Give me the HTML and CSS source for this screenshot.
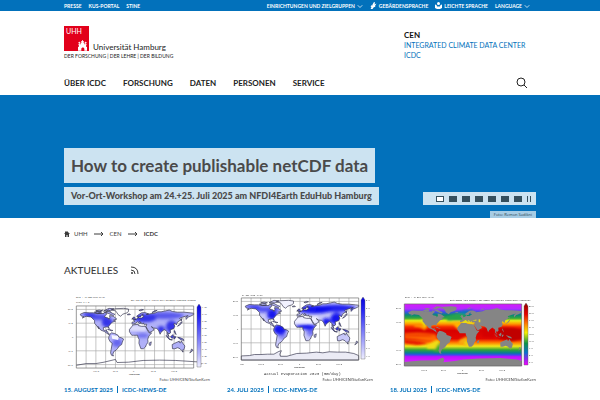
FILE: index.html
```html
<!DOCTYPE html>
<html lang="de">
<head>
<meta charset="utf-8">
<meta name="viewport" content="width=device-width, initial-scale=1">
<title>ICDC : Universität Hamburg</title>
<link rel="stylesheet" href="styles.css">
</head>
<body>
<svg class="defs" aria-hidden="true">
  <defs>
    <path id="land" d="M-168-66L-156-71-140-70-128-70-115-68-95-68-94-72-85-68-94-60-92-57-82-55-80-51-77-56-78-62-70-61-65-59-56-52-66-49-60-46-70-43-75-38-81-31-80-25-83-29-90-29-97-27-97-21-91-18-87-21-88-16-83-15-83-10-78-9-80-7-85-10-94-16-105-20-112-29-114-31-110-23-117-32-124-40-124-48-135-58-150-60-162-55-157-59-165-61ZM-125-72L-115-73-105-73-103-69-115-68ZM-95-76L-80-83-65-82-78-76ZM-90-73L-80-74-68-68-62-66-66-62-74-65-85-70ZM-120-76L-110-78-100-76-108-74ZM-84-22L-78-23-74-20-68-19-72-18-78-20ZM-77-8L-72-12-62-10-52-5-50 0-40 3-35 6-39 15-41 22-48 26-54 34-58 38-65 42-68 50-66 55-72 53-75 46-73 36-70 18-76 14-81 5-80-1ZM-17-15L-17-22-10-30-6-35 10-37 11-33 20-31 32-31 37-22 43-12 51-12 42-2 39 7 40 15 35 22 32 29 26 34 18 34 12 18 13 8 9 0 8-5-4-5-10-5ZM44 24L43 18 50 14 48 24ZM-9-37L-9-43-1-44-4-48 4-52 9-55 9-58 13-55 20-55 28-60 22-62 25-66 20-64 17-58 12-58 5-60 10-64 20-70 30-71 42-67 35-65 45-67 60-69 70-73 80-73 90-75 105-78 115-74 130-72 150-72 170-70 180-69 180-65 170-60 163-58 157-51 156-58 163-62 150-59 137-54 141-50 130-43 127-35 122-40 119-38 122-31 118-24 108-21 109-12 104-9 100-13 104-1 98-8 98-16 90-22 80-14 77-8 72-20 66-25 57-26 50-30 57-24 58-20 45-13 39-21 34-30 36-37 27-37 26-41 22-37 19-42 13-45 18-40 15-38 8-44 0-39ZM-6-50L2-51-2-58-6-57ZM-10-52L-6-55-7-52ZM-23-64L-14-65-16-67-23-66ZM130-31L136-34 141-38 145-44 141-43 136-36 132-33ZM142-46L144-54 141-49ZM95-5L106 5 104 6 98-1ZM105 7L115 8 114 9ZM109-1L117-7 118 0 114 4ZM119 5L120-1 125-1 122 5ZM120-18L122-18 126-7 121-13ZM131 1L138 2 148 6 150 10 140 8 137 5ZM114 22L122 18 129 15 136 12 136 16 140 17 142 11 147 19 153 26 150 37 143 39 138 34 131 31 122 34 115 34ZM145 41L148 41 147 44ZM173 35L178 38 174 42 168 46 172 41ZM52-71L60-76 68-77 57-72ZM12-77L20-80 26-79 17-76Z"/>
    <path id="greenland" d="M-73-78L-60-82-35-83-20-81-20-74-25-70-38-66-44-60-52-65-55-70-60-76Z"/>
    <path id="antarctica" d="M-180 78L-155 77-140 74-120 74-100 73-80 73-65 65-57 63-62 73-60 79-40 79-25 75-10 71 20 70 50 67 70 69 90 66 115 67 140 67 165 71 180 77 180 90-180 90Z"/>
    <path id="grid" d="M-150-90V90M-120-90V90M-90-90V90M-60-90V90M-30-90V90M0-90V90M30-90V90M60-90V90M90-90V90M120-90V90M150-90V90M-180-80H180M-180-40H180M-180 0H180M-180 40H180M-180 80H180"/>
    <clipPath id="landClip"><use href="#land"/></clipPath>
    <clipPath id="frameClip"><path d="M-180-90H180V90H-180Z"/></clipPath>
    <filter id="soft"><feGaussianBlur stdDeviation="5"/></filter>
    <filter id="softer"><feGaussianBlur stdDeviation="3"/></filter>
    <linearGradient id="blueScale" x2="0" y2="1"><stop stop-color="#0804d8"/><stop offset=".2" stop-color="#2222f4"/><stop offset="1" stop-color="#eeeeff"/></linearGradient>
    <linearGradient id="rainbow" x2="0" y2="1"><stop stop-color="#8c0000"/><stop offset=".18" stop-color="#e80000"/><stop offset=".35" stop-color="#ff8a00"/><stop offset=".48" stop-color="#f4f000"/><stop offset=".65" stop-color="#0b9445"/><stop offset=".8" stop-color="#0871d0"/><stop offset=".9" stop-color="#8b28ef"/><stop offset="1" stop-color="#f500ff"/></linearGradient>
    <linearGradient id="ocean" x2="0" y2="1"><stop stop-color="#d818ff"/><stop offset=".08" stop-color="#b22bff"/><stop offset=".13" stop-color="#3b50e8"/><stop offset=".18" stop-color="#078b70"/><stop offset=".23" stop-color="#37a83b"/><stop offset=".27" stop-color="#e9ec12"/><stop offset=".32" stop-color="#ff9c00"/><stop offset=".37" stop-color="#f52a00"/><stop offset=".43" stop-color="#d70000"/><stop offset=".56" stop-color="#e30800"/><stop offset=".62" stop-color="#ff7800"/><stop offset=".68" stop-color="#f1e719"/><stop offset=".74" stop-color="#30a336"/><stop offset=".79" stop-color="#087b98"/><stop offset=".82" stop-color="#3949ed"/><stop offset=".85" stop-color="#c010ff"/><stop offset="1" stop-color="#e82dff"/></linearGradient>
  </defs>
</svg>

<div class="topbar">
  <nav class="wrap topbar-row" aria-label="Portale">
    <a href="#">Presse</a><a href="#">KUS-Portal</a><a href="#">STiNE</a>
    <button type="button" class="push">Einrichtungen und Zielgruppen <svg class="chev" viewBox="0 0 8 8"><path d="M1 3l3 3 3-3"/></svg></button>
    <a href="#"><svg class="mini" viewBox="0 0 14 14"><path d="M5 5L8 0l2 1-1 4 4-2-3 5 1 1-4 2-2 3H1l2-3-2-2 2-1-1-2 3 1z"/></svg>Gebärdensprache</a>
    <a href="#"><svg class="mini" viewBox="0 0 14 14"><circle cx="7" cy="3" r="3"/><path d="M0 5l3 1 1 3h6l1-3 3-1v7l-4 2H4l-4-2z"/></svg>Leichte Sprache</a>
    <button type="button">Language <svg class="chev" viewBox="0 0 8 8"><path d="M1 3l3 3 3-3"/></svg></button>
  </nav>
</div>

<header class="wrap">
  <div class="brand-row">
    <a class="logo" href="#">
      <span class="logo-top">
        <span class="logo-mark">
          <span class="uhh">UHH</span>
          <svg class="castle" viewBox="0 0 27 31"><path d="M0 31V19h3v-4H1v-3h2V9H1V6h2V4h2v2h2v3H5v3h3V8h2V5H9V3h3V0h3v3h3v2h-1v3h2v4h3V9h-2V6h2V4h2v2h2v3h-2v3h2v3h-2v4h3v12h-8v-5c0-6-9-6-9 0v5z"/></svg>
        </span>
        <span class="logo-name">Universität Hamburg</span>
      </span>
      <span class="logo-claim">der Forschung | der Lehre | der Bildung</span>
    </a>
    <div class="unit"><strong>CEN</strong><a href="#">Integrated Climate Data Center</a><a href="#">ICDC</a></div>
  </div>
  <nav class="main-nav" aria-label="Hauptmenü">
    <a href="#">Über ICDC</a><a href="#">Forschung</a><a href="#">Daten</a><a href="#">Personen</a><a href="#">Service</a>
    <button type="button" class="search" aria-label="Suche"><svg viewBox="0 0 12 12"><circle cx="5" cy="5" r="4"/><path d="M8 8l3 3"/></svg></button>
  </nav>
</header>

<section class="hero">
  <div class="wrap hero-row">
    <div class="hero-text">
      <h1>How to create publishable netCDF data</h1>
      <p>Vor-Ort-Workshop am 24.+25. Juli 2025 am NFDI4Earth EduHub Hamburg</p>
    </div>
    <div class="pager">
      <button type="button" class="on" aria-label="1"></button><button type="button" aria-label="2"></button><button type="button" aria-label="3"></button><button type="button" aria-label="4"></button><button type="button" aria-label="5"></button><button type="button" aria-label="6"></button><button type="button" aria-label="7"></button><button type="button" class="pause" aria-label="Pause"></button>
    </div>
  </div>
  <div class="wrap credit-row"><span class="credit">Foto: Remon Sadikni</span></div>
</section>

<main class="wrap">
  <nav class="crumbs" aria-label="Brotkrumen">
    <a href="#"><svg class="home" viewBox="0 0 12 12"><path d="M6 0l6 6h-2v6H7V8H5v4H2V6H0L2 4V1h2v1z"/></svg>UHH</a>
    <svg class="arrow" viewBox="0 0 10 6"><path d="M0 3h9M7 1l2 2-2 2"/></svg>
    <a href="#">CEN</a>
    <svg class="arrow" viewBox="0 0 10 6"><path d="M0 3h9M7 1l2 2-2 2"/></svg>
    <strong>ICDC</strong>
  </nav>
  <h2 class="section-title">Aktuelles <svg class="rss" viewBox="0 0 9 9"><circle cx="2" cy="7" r="1"/><path d="M1 4q4 0 4 4M1 1q7 0 7 7"/></svg></h2>
  <div class="cards">
    <article class="card">
      <svg class="map" viewBox="0 0 146 84">
        <g transform="translate(71 45) scale(.326 .345)">
          <use href="#grid" class="grid"/>
          <use href="#land" fill="#b0b0f8"/>
          <g clip-path="url(#landClip)">
            <g filter="url(#soft)" fill="#3434e8">
              <ellipse cx="-85" cy="-42" rx="17" ry="14"/><ellipse cx="-115" cy="-58" rx="32" ry="9" opacity=".8"/><ellipse cx="-140" cy="-65" rx="20" ry="6"/><ellipse cx="-55" cy="17" rx="15" ry="12" opacity=".6"/><ellipse cx="30" cy="-55" rx="36" ry="12"/><ellipse cx="90" cy="-62" rx="60" ry="10" opacity=".7"/><ellipse cx="112" cy="-30" rx="17" ry="18"/><ellipse cx="80" cy="-22" rx="11" ry="10"/><ellipse cx="23" cy="-4" rx="20" ry="7" opacity=".5"/><ellipse cx="114" cy="1" rx="35" ry="7"/>
            </g>
            <path d="M-17-34H34V-17H-17Z" fill="#ddddfc" filter="url(#softer)"/>
            <path d="M-72-6L-49-2-52 9-70 5Z" fill="#f5f5ff"/>
          </g>
          <use href="#land" class="coast"/><use href="#greenland" class="coast"/>
          <path class="coast" d="M-120-75l12 4 8-7 9 8 10-9 8 8M-180 82l30-5 30 0 25-4 35-8 5 9 35-1 45-5 50-1 50 1 65 4 15 6"/>
          <path class="frame" d="M-180-90H180V90H-180Z"/>
        </g>
        <path d="M133 15l2-3 2 3v60h-4z" fill="url(#blueScale)" class="scale"/>
        <g class="tiny"><text x="12" y="6">Zeit : 16-JUN-2025 00:00</text><text x="12" y="11">Tiefe 0.1 m</text><text x="67" y="9">ESA CCI SM V09.2 Active Soil Moisture Combined Product</text><text x="138" y="16">1.00</text><text x="138" y="23">0.90</text><text x="138" y="30">0.80</text><text x="138" y="37">0.70</text><text x="138" y="44">0.60</text><text x="138" y="51">0.50</text><text x="138" y="58">0.40</text><text x="138" y="65">0.30</text><text x="138" y="72">0.20</text><text x="4" y="18">80°N</text><text x="4" y="32">40°N</text><text x="8" y="46">0°</text><text x="4" y="60">40°S</text><text x="4" y="74">80°S</text><text x="29" y="80">120°W</text><text x="49" y="80">60°W</text><text x="69" y="80">0°</text><text x="87" y="80">60°E</text><text x="107" y="80">120°E</text><text x="65" y="83">LONGITUDE</text></g>
      </svg>
      <p class="photo">Foto: UHH/CEN/StefanKern</p>
      <p class="meta"><time>15. August 2025</time><span>ICDC-News-DE</span></p>
      <h3>Aktualisierung ESA CCI Boden</h3>
    </article>
    <article class="card">
      <svg class="map" viewBox="0 0 146 84">
        <g transform="translate(73 37) scale(.326 .345)">
          <use href="#grid" class="grid"/>
          <use href="#land" fill="#c8c8f9"/><use href="#greenland" fill="#f2f2ff"/><use href="#antarctica" fill="#ebebf5"/>
          <g clip-path="url(#landClip)">
            <g filter="url(#soft)" fill="#1212ee">
              <ellipse cx="-85" cy="-40" rx="16" ry="13"/><ellipse cx="-105" cy="-57" rx="46" ry="9" opacity=".65"/><ellipse cx="-145" cy="-65" rx="24" ry="6" opacity=".7"/><ellipse cx="-62" cy="1" rx="20" ry="15"/><ellipse cx="-53" cy="21" rx="12" ry="8" opacity=".4"/><ellipse cx="45" cy="-57" rx="54" ry="12"/><ellipse cx="110" cy="-60" rx="60" ry="11" opacity=".9"/><ellipse cx="112" cy="-30" rx="19" ry="17"/><ellipse cx="81" cy="-21" rx="12" ry="11"/><ellipse cx="19" cy="-6" rx="32" ry="7"/><ellipse cx="32" cy="5" rx="12" ry="16" opacity=".5"/><ellipse cx="116" cy="1" rx="40" ry="8"/>
            </g>
            <path d="M-17-36H55V-16H-17Z" fill="#f0f0ff" filter="url(#softer)"/>
          </g>
          <use href="#land" class="coast"/><use href="#greenland" class="coast"/><use href="#antarctica" class="coast"/>
          <path class="frame" d="M-180-90H180V90H-180Z"/>
        </g>
        <path d="M134 8l2-3 2 3v59h-4z" fill="url(#blueScale)" class="scale"/>
        <g class="tiny"><text x="15" y="4">01-JUL-2023 12:00</text><text x="139" y="9">8.0</text><text x="139" y="17">7.0</text><text x="139" y="25">6.0</text><text x="139" y="33">5.0</text><text x="139" y="41">4.0</text><text x="139" y="49">3.0</text><text x="139" y="57">2.0</text><text x="139" y="65">1.0</text><text x="6" y="10">80°N</text><text x="6" y="24">40°N</text><text x="10" y="38">0°</text><text x="6" y="52">40°S</text><text x="6" y="66">80°S</text><text x="13" y="73">180°</text><text x="31" y="73">120°W</text><text x="51" y="73">60°W</text><text x="72" y="73">0°</text><text x="89" y="73">60°E</text><text x="109" y="73">120°E</text><text x="67" y="76">LONGITUDE</text></g>
        <text class="map-label" x="37" y="83">Actual evaporation 2023 (mm/day)</text>
      </svg>
      <p class="photo">Foto: UHH/CEN/StefanKern</p>
      <p class="meta"><time>24. Juli 2025</time><span>ICDC-News-DE</span></p>
      <h3>Aktualisierung GLEAM Daten</h3>
    </article>
    <article class="card">
      <svg class="map" viewBox="0 0 146 84">
        <g transform="translate(73 43) scale(.326 .345)">
          <path d="M-180-90H180V90H-180Z" fill="url(#ocean)"/>
          <g clip-path="url(#frameClip)"><g filter="url(#softer)">
            <path d="M-180-4Q-130-10-85-2L-72 24Q-110 14-180 10Z" fill="#ff6a00"/>
            <path d="M-180-1Q-130-5-85 1L-100 5-180 5Z" fill="#f23a00"/>
            <path d="M-110 30Q-80 12-72 15V40H-110Z" fill="#f1dc12"/><path d="M-80 32l10-12v28h-20z" fill="#42aa32"/>
            <path d="M-150-30Q-115-34-108-25L-118-14Q-130-24-150-24Z" fill="#ff9a00"/><path d="M-130-42L-122-46-112-25-118-24Z" fill="#e2e811"/>
            <path d="M-180 15Q-130 16-105 24L-140 29-180 24Z" fill="#e51500"/>
            <path d="M-10 14L14 3V32Q0 26-15 25Z" fill="#f9a90c"/><path d="M4 24l10-10v18z" fill="#e5e812"/>
            <path d="M-30-38L0-38-12-14-24-24Z" fill="#ffb300"/><path d="M-50-52Q-20-68 10-66L3-43-48-42Z" fill="#26a34d"/><path d="M-20-64L5-72 35-74 10-60Z" fill="#0c75bd"/>
            <path d="M105-20Q145-25 180-15V12L150 18 110 10Z" fill="#c00000"/><path d="M60-22L95-20V8L60 6Z" fill="#d50000"/>
          </g></g>
          <g fill="#858585"><use href="#land"/><use href="#greenland"/><path d="M-180 78L-130 74-80 73-62 65-57 70-60 79-25 75 0 71 50 68 115 67 165 71 180 75V90H-180Z"/></g>
          <path d="M-5-35Q10-44 35-32L30-31 10-35ZM28-42l13-3v4zM48-37v-9l5 1v8z" fill="#e8d717"/>
          <path class="frame" d="M-180-90H180V90H-180Z"/>
        </g>
        <path d="M134 14l2-3 2 3v59h-4z" fill="url(#rainbow)" class="scale"/>
        <g class="tiny"><text x="15" y="6">Zeit : 16-OCT-2002 12:00</text><text x="60" y="9">ERA5/MODIS Aqua monthly SST MODIS sea surface temperature composite</text><text x="139" y="15">30.0</text><text x="139" y="22">27.0</text><text x="139" y="29">24.0</text><text x="139" y="36">21.0</text><text x="139" y="43">18.0</text><text x="139" y="50">12.0</text><text x="139" y="57">9.0</text><text x="139" y="64">3.0</text><text x="139" y="71">0.0</text><text x="6" y="17">80°N</text><text x="6" y="31">40°N</text><text x="10" y="45">0°</text><text x="6" y="59">40°S</text><text x="6" y="73">80°S</text><text x="31" y="79">120°W</text><text x="51" y="79">60°W</text><text x="72" y="79">0°</text><text x="89" y="79">60°E</text><text x="109" y="79">120°E</text><text x="67" y="82">LONGITUDE</text></g>
      </svg>
      <p class="photo">Foto: UHH/CEN/StefanKern</p>
      <p class="meta"><time>18. Juli 2025</time><span>ICDC-News-DE</span></p>
      <h3>Verlängerung der MODIS SST</h3>
    </article>
  </div>
</main>
</body>
</html>
```
FILE: styles.css
```css
* { box-sizing: border-box; }
body { margin: 0; background: #fff; color: #3b3b3b; font-family: Lato, "Open Sans", sans-serif; }
a { color: inherit; text-decoration: none; }
button { border: 0; padding: 0; background: none; color: inherit; font: inherit; text-transform: inherit; }
h1, h2, h3, p { margin: 0; }
svg { display: block; flex: none; }
.defs { position: absolute; width: 0; height: 0; }
.wrap { padding: 0 64px; }

.topbar { background: #0271bb; color: #fff; }
.topbar-row { display: flex; align-items: center; gap: 7px; height: 11px; padding-right: 70px; font-size: 5px; font-weight: 700; text-transform: uppercase; white-space: nowrap; }
.topbar-row a, .topbar-row button { display: flex; align-items: center; gap: 2px; }
.topbar-row .push { margin-left: auto; }
.chev { width: 6px; height: 6px; fill: none; stroke: #fff; }
.mini { width: 7px; height: 7px; fill: #fff; }

.brand-row { display: flex; justify-content: space-between; padding-top: 15px; }
.logo { display: block; color: #222; }
.logo-top { display: flex; align-items: flex-end; gap: 4px; }
.logo-mark { display: flex; flex-direction: column; justify-content: space-between; width: 25px; height: 25px; padding: 1px 2px 0; background: #e2001a; }
.uhh { color: #fff; font-size: 7px; line-height: 8px; }
.castle { align-self: flex-end; width: 9px; height: 11px; fill: #fff; }
.logo-name { font-size: 8px; line-height: 8px; }
.logo-claim { display: block; margin-top: 1px; font-size: 5px; line-height: 8px; text-transform: uppercase; }
.unit { display: flex; flex-direction: column; width: 132px; padding-top: 4px; font-size: 7px; line-height: 10px; color: #0271bb; text-transform: uppercase; white-space: nowrap; }
.unit strong { color: #111; font-size: 8px; }
.main-nav { display: flex; align-items: center; gap: 17px; height: 24px; margin-top: 11px; font-size: 8px; font-weight: 700; color: #222; text-transform: uppercase; }
.search { margin-left: auto; margin-right: 8px; }
.search svg { width: 12px; height: 12px; fill: none; stroke: #222; }

.hero { display: flex; flex-direction: column; background: #0271bb; padding-top: 53px; }
.hero-row { display: flex; align-items: flex-end; justify-content: space-between; }
.hero-text { display: flex; flex-direction: column; align-items: flex-start; gap: 4px; color: #4a4a4a; white-space: nowrap; }
.hero h1 { padding: 0 7px; background: #cce3f1; font-size: 17px; line-height: 35px; }
.hero p { padding: 0 7px; background: #cce3f1; font-size: 9px; line-height: 18px; font-weight: 900; }
.pager { display: flex; align-items: center; gap: 5px; height: 13px; padding: 0 5px 0 13px; background: #cce3f1; }
.pager button { width: 8px; height: 6px; background: #35505e; }
.pager .on { background: #fff; border: 1px solid #35505e; }
.pager .pause { width: 4px; background: none; border: solid #35505e; border-width: 0 1px; }
.credit-row { display: flex; justify-content: flex-end; padding-top: 6px; }
.credit { padding: 0 4px; background: #a6cce4; color: #263f50; font-family: "Open Sans", sans-serif; font-size: 4px; line-height: 7px; }

.crumbs { display: flex; align-items: center; gap: 6px; height: 31px; font-size: 6px; text-transform: uppercase; }
.crumbs a { display: flex; align-items: center; gap: 4px; }
.home { width: 6px; height: 6px; fill: #3b3b3b; }
.arrow { width: 10px; height: 6px; fill: none; stroke: #3b3b3b; stroke-width: 1; }
.section-title { display: flex; align-items: center; gap: 12px; margin-top: 13px; font-size: 10px; line-height: 16px; font-weight: 500; text-transform: uppercase; }
.rss { width: 9px; height: 9px; fill: none; stroke: #3b3b3b; }
.rss circle { fill: #3b3b3b; stroke: none; }

.cards { display: grid; grid-template-columns: repeat(3, 1fr); gap: 17px; margin-top: 14px; }
.map { width: 100%; height: auto; }
.grid, .coast, .frame { fill: none; }
.grid { stroke: #aaa; stroke-width: 2; }
.coast { stroke: #34344c; stroke-width: 2; }
.frame { stroke: #666; stroke-width: 2; }
.scale { stroke: #666; stroke-width: 1; stroke-opacity: .4; }
.tiny { fill: #111; font-family: "Liberation Mono", monospace; font-size: 2px; }
.map-label { fill: #333; font-family: "Liberation Mono", monospace; font-size: 4px; }
.photo { font-family: "Open Sans", sans-serif; font-size: 4px; line-height: 7px; text-align: right; color: #222; }
.meta { display: flex; gap: 4px; margin-top: 3px; font-size: 6px; line-height: 7px; font-weight: 700; color: #0271bb; text-transform: uppercase; }
.meta span { border-left: 1px solid #0271bb; padding-left: 4px; }
.card h3 { margin-top: 4px; font-size: 10px; line-height: 12px; white-space: nowrap; }
```
